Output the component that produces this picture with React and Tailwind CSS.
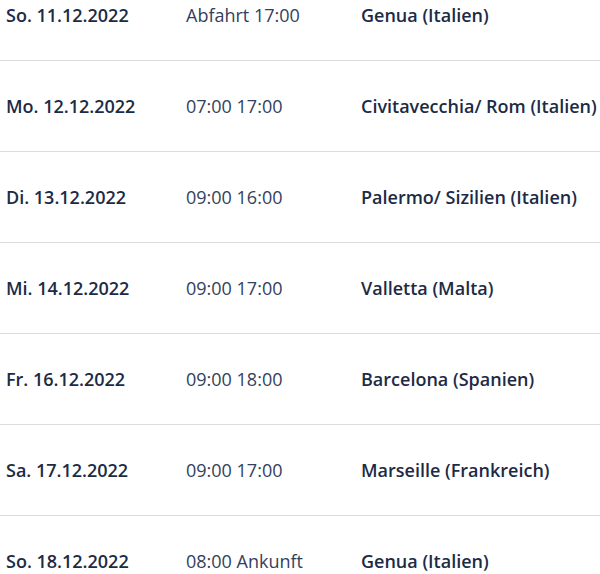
import React from "react";

const ROWS = [
  { date: "So. 11.12.2022", time: "Abfahrt 17:00", port: "Genua (Italien)" },
  { date: "Mo. 12.12.2022", time: "07:00 17:00", port: "Civitavecchia/ Rom (Italien)" },
  { date: "Di. 13.12.2022", time: "09:00 16:00", port: "Palermo/ Sizilien (Italien)" },
  { date: "Mi. 14.12.2022", time: "09:00 17:00", port: "Valletta (Malta)" },
  { date: "Fr. 16.12.2022", time: "09:00 18:00", port: "Barcelona (Spanien)" },
  { date: "Sa. 17.12.2022", time: "09:00 17:00", port: "Marseille (Frankreich)" },
  { date: "So. 18.12.2022", time: "08:00 Ankunft", port: "Genua (Italien)" },
];

export default function App() {
  return (
    <div className="w-[600px] h-[574px] overflow-hidden bg-white font-['Open_Sans',sans-serif] text-[18px]">
      <div className="-mt-[30px]">
        {ROWS.map((r, i) => (
          <div
            key={i}
            className="flex items-center h-[91px] border-b border-[#dcdcdc] whitespace-nowrap"
          >
            <div className="w-[186px] pl-[6px] font-[550] text-[#1c2b45]">{r.date}</div>
            <div className="w-[175px] text-[#33415c]">{r.time}</div>
            <div className="font-[550] text-[#1c2b45]">{r.port}</div>
          </div>
        ))}
      </div>
    </div>
  );
}
